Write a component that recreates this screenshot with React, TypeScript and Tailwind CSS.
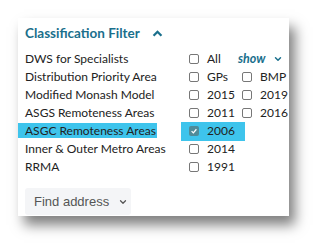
import { ChevronDown } from "lucide-react";

const ROWS = [
  { label: "DWS for Specialists", a: "All", b: null },
  { label: "Distribution Priority Area", a: "GPs", b: "BMP" },
  { label: "Modified Monash Model", a: "2015", b: "2019" },
  { label: "ASGS Remoteness Areas", a: "2011", b: "2016" },
  { label: "ASGC Remoteness Areas", a: "2006", b: null, hl: true },
  { label: "Inner & Outer Metro Areas", a: "2014", b: null },
  { label: "RRMA", a: "1991", b: null },
];

function Box({ checked }: { checked?: boolean }) {
  if (checked) {
    return (
      <span className="flex h-[10px] w-[10px] shrink-0 items-center justify-center rounded-[2px] bg-[#4f8b99]">
        <svg viewBox="0 0 10 10" className="h-[8px] w-[8px]">
          <path d="M2 5.2 L4.2 7.3 L8 2.8" fill="none" stroke="#fff" strokeWidth="1.6" />
        </svg>
      </span>
    );
  }
  return <span className="h-[10px] w-[10px] shrink-0 rounded-[2px] border border-[#777] bg-white" />;
}

export default function App() {
  return (
    <div className="h-[252px] w-[325px] overflow-hidden bg-white pl-[18px] pt-[18px]">
      <div
        className="h-[198px] w-[271px] whitespace-nowrap bg-white pl-[7px] pt-[6px] text-[#222] shadow-[6px_9px_12px_rgba(0,0,0,0.5)]"
        style={{ fontFamily: "Lato, 'Noto Sans', sans-serif" }}
      >
        {/* Header */}
        <div className="flex items-center gap-[12px] leading-[18px]">
          <span className="text-[13.5px] font-bold text-[#1a6f8c]">Classification Filter</span>
          <svg viewBox="0 0 12 8" className="h-[7px] w-[11px]">
            <path d="M1.5 6.5 L6 2 L10.5 6.5" fill="none" stroke="#1a6f8c" strokeWidth="2.6" />
          </svg>
        </div>

        {/* Filter rows */}
        <div className="mt-[8px] flex flex-col text-[12px] leading-[18px]">
          {ROWS.map((r, i) => (
            <div key={r.label} className="flex h-[18px] items-center">
              <div className="w-[164px]">
                <span className={r.hl ? "-ml-[7px] inline-block h-[15px] w-[139px] bg-[#3ec4ec] pl-[7px] leading-[15px]" : ""}>
                  {r.label}
                </span>
              </div>
              <div className={r.hl ? "-ml-[8px] flex h-[19px] w-[64px] items-center gap-[8px] bg-[#3ec4ec] pl-[8px]" : "flex w-[53px] items-center gap-[8px]"}>
                <Box checked={r.hl} />
                <span>{r.a}</span>
              </div>
              {r.b && (
                <div className="flex items-center gap-[8px]">
                  <Box />
                  <span>{r.b}</span>
                </div>
              )}
              {i === 0 && (
                <div className="-ml-[4px] flex items-center gap-[7px] text-[12.5px] font-bold italic text-[#1a6f8c]">
                  <span>show</span>
                  <ChevronDown className="h-[10px] w-[10px]" strokeWidth={3.5} />
                </div>
              )}
            </div>
          ))}
        </div>

        {/* Find address */}
        <div className="mt-[12px] flex h-[27px] w-[106px] items-center gap-[9px] rounded-[3px] bg-[#f4f5f7] pl-[9px] text-[13px] text-[#555]" style={{ fontFamily: "'Liberation Sans', Arial, sans-serif" }}>
          <span>Find address</span>
          <ChevronDown className="h-[10px] w-[10px]" strokeWidth={3} />
        </div>
      </div>
    </div>
  );
}
